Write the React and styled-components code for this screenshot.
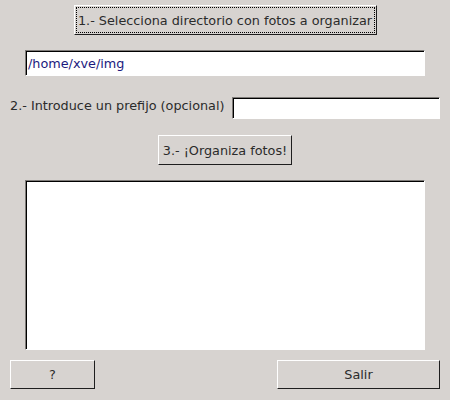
import React from "react"
import styled, { createGlobalStyle } from "styled-components"

const GlobalStyle = createGlobalStyle`
  html, body {
    margin: 0;
    padding: 0;
    background: #d7d3d0;
  }
  body {
    font-family: "DejaVu Sans", "Liberation Sans", sans-serif;
    font-size: 12.8px;
    color: #2b2b2b;
  }
`

const Window = styled.div`
  width: 450px;
  height: 400px;
  box-sizing: border-box;
  background: #d7d3d0;
  padding-top: 5px;
  display: flex;
  flex-direction: column;
`

const Centered = styled.div`
  display: flex;
  justify-content: center;
  margin-top: ${p => p.$top || 0}px;
`

const Button = styled.button`
  box-sizing: border-box;
  width: ${p => p.$w}px;
  height: ${p => p.$h || 30}px;
  padding: 0;
  margin: 0;
  background: #d7d3d0;
  border: 1px solid;
  border-color: #ffffff #1e1e1e #1e1e1e #ffffff;
  font-family: "DejaVu Sans", "Liberation Sans", sans-serif;
  font-size: 12.8px;
  color: #2b2b2b;
  display: flex;
  align-items: center;
  justify-content: center;
  position: relative;
`

const FocusRing = styled.span`
  position: absolute;
  inset: 1px;
  border: 1px dotted #000;
`

const Sunken = styled.div`
  box-sizing: border-box;
  background: #fff;
  border: 1px solid;
  border-color: #7e7b78 #ffffff #ffffff #7e7b78;
  box-shadow: inset 1px 1px 0 #000;
`

const PathEntry = styled(Sunken)`
  margin: 15px 0 0 25px;
  width: 400px;
  height: 26px;
  padding: 0 0 0 2px;
  display: flex;
  align-items: center;
  color: #1a1a7e;
`

const PrefixRow = styled.div`
  margin-top: 21px;
  display: flex;
  align-items: center;
  height: 22px;
`

const Label = styled.span`
  margin-left: 10px;
  width: 222px;
  position: relative;
  top: -3px;
`

const PrefixEntry = styled(Sunken)`
  width: 208px;
  height: 22px;
`

const LogArea = styled(Sunken)`
  margin: 15px 0 0 25px;
  width: 400px;
  height: 170px;
`

const BottomRow = styled.div`
  margin-top: 10px;
  padding: 0 10px;
  display: flex;
  justify-content: space-between;
`

export default function App() {
  return (
    <>
      <GlobalStyle />
      <Window>
        <Centered>
          <Button $w={303}>
            <FocusRing />
            1.- Selecciona directorio con fotos a organizar
          </Button>
        </Centered>
        <PathEntry>/home/xve/img</PathEntry>
        <PrefixRow>
          <Label>2.- Introduce un prefijo (opcional)</Label>
          <PrefixEntry />
        </PrefixRow>
        <Centered $top={16}>
          <Button $w={134}>3.- ¡Organiza fotos!</Button>
        </Centered>
        <LogArea />
        <BottomRow>
          <Button $w={85} $h={29}>?</Button>
          <Button $w={163} $h={29}>Salir</Button>
        </BottomRow>
      </Window>
    </>
  )
}
